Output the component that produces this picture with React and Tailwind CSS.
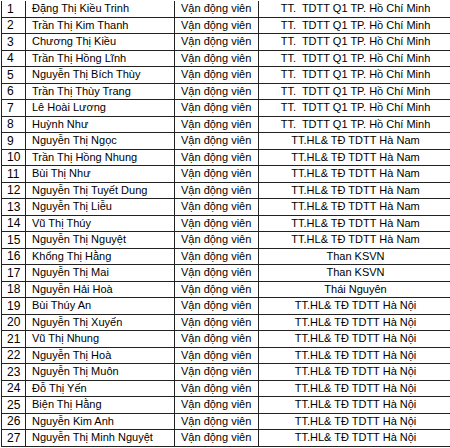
const HCM = "TT.  TDTT Q1 TP. Hồ Chí Minh";
const HNAM = "TT.HL& TĐ TDTT Hà Nam";
const HNOI = "TT.HL& TĐ TDTT Hà Nội";

const rows = [
  ["Đặng Thị Kiều Trinh", HCM],
  ["Trần Thị Kim Thanh", HCM],
  ["Chương Thị Kiều", HCM],
  ["Trần Thị Hồng Lĩnh", HCM],
  ["Nguyễn Thị Bích Thùy", HCM],
  ["Trần Thị Thùy Trang", HCM],
  ["Lê Hoài Lương", HCM],
  ["Huỳnh Như", HCM],
  ["Nguyễn Thị Ngọc", HNAM],
  ["Trần Thị Hồng Nhung", HNAM],
  ["Bùi Thị Như", HNAM],
  ["Nguyễn Thị Tuyết Dung", HNAM],
  ["Nguyễn Thị Liễu", HNAM],
  ["Vũ Thị Thúy", HNAM],
  ["Nguyễn Thị Nguyệt", HNAM],
  ["Khổng Thị Hằng", "Than KSVN"],
  ["Nguyễn Thị Mai", "Than KSVN"],
  ["Nguyễn Hải Hoà", "Thái Nguyên"],
  ["Bùi Thúy An", HNOI],
  ["Nguyễn Thị Xuyến", HNOI],
  ["Vũ Thị Nhung", HNOI],
  ["Nguyễn Thị Hoà", HNOI],
  ["Nguyễn Thị Muôn", HNOI],
  ["Đỗ Thị Yến", HNOI],
  ["Biện Thị Hằng", HNOI],
  ["Nguyễn Kim Anh", HNOI],
  ["Nguyễn Thị Minh Nguyệt", HNOI],
];

export default function App() {
  return (
    <div
      className="w-[450px] h-[448px] overflow-hidden bg-white text-black text-[11px] leading-none pt-[1px] pl-[1px]"
      style={{ fontFamily: '"Liberation Sans", Arial, sans-serif' }}
    >
      <div className="w-[451px] border-l border-[#222]">
        {rows.map(([name, org], i) => (
          <div key={i} className="flex h-[16.5px] border-b border-[#222]">
            {/* STT */}
            <div className="w-[24px] shrink-0 border-r border-[#222] flex items-center pl-[5px] text-[12px]">
              {i + 1}
            </div>
            {/* Họ tên */}
            <div className="w-[149px] shrink-0 border-r border-[#222] flex items-center pl-[6px] whitespace-nowrap overflow-hidden">
              {name}
            </div>
            {/* Vai trò */}
            <div className="w-[84px] shrink-0 border-r border-[#222] flex items-center pl-[6px] whitespace-nowrap">
              Vận động viên
            </div>
            {/* Đơn vị */}
            <div className="w-[193px] shrink-0 flex items-center justify-center whitespace-pre">
              {org}
            </div>
          </div>
        ))}
      </div>
    </div>
  );
}
